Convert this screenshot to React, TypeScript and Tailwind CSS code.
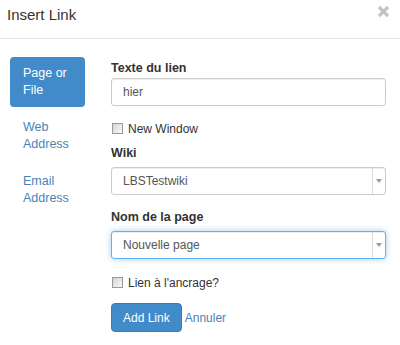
const NAV = ["Page or File", "Web Address", "Email Address"];

function Checkbox() {
  return (
    <span className="block h-[11px] w-[11px] shrink-0 border border-[#9a9a9a] bg-gradient-to-br from-[#d4d4d4] to-[#fafafa]" />
  );
}

function Caret() {
  return (
    <svg width="6" height="4" viewBox="0 0 6 4" aria-hidden="true">
      <path d="M0 0h6L3 4z" fill="#9a9a9a" />
    </svg>
  );
}

function Select({ value, focused }: { value: string; focused?: boolean }) {
  return (
    <div
      className={
        "flex h-[28px] items-stretch rounded-[3px] border bg-white " +
        (focused
          ? "border-[#66afe9] shadow-[0_0_6px_rgba(102,175,233,0.6),inset_0_1px_1px_rgba(0,0,0,0.075)]"
          : "border-[#cccccc] shadow-[inset_0_1px_1px_rgba(0,0,0,0.075)]")
      }
    >
      <span className="flex flex-1 items-center pl-[11px] text-[12px] text-[#555]">{value}</span>
      <span className="flex w-[13px] items-center justify-center border-l border-[#d9d9d9]">
        <Caret />
      </span>
    </div>
  );
}

export default function App() {
  return (
    <div className="h-[345px] w-[400px] overflow-hidden bg-white font-['Liberation_Sans',Arial,sans-serif] text-[#333]">
      {/* Header: title + close, thin rule at y=38 */}
      <header className="flex h-[39px] items-start justify-between border-b border-[#e5e5e5] pl-[7px] pr-[10px] pt-[5px]">
        <h1 className="text-[15px] leading-[20px]">Insert Link</h1>
        <svg width="13" height="13" viewBox="0 0 13 13" aria-label="Close">
          <path d="M2 2l9 9M11 2l-9 9" stroke="#c3c3c3" strokeWidth="3.2" />
        </svg>
      </header>

      <div className="flex pt-[18px]">
        {/* Link type tabs */}
        <nav className="ml-[10px] flex w-[75px] flex-col gap-[4px]">
          {NAV.map((label, i) => (
            <span
              key={label}
              className={
                "rounded-[4px] px-[13px] py-[8px] text-[12.5px] leading-[17px] " +
                (i === 0 ? "bg-[#428bca] text-white" : "text-[#4a82b8]")
              }
            >
              {label}
            </span>
          ))}
        </nav>

        {/* Form */}
        <form className="ml-[26px] flex w-[275px] flex-col pt-[3px]">
          <label className="text-[12.5px] font-bold leading-[17px]">Texte du lien</label>
          <div className="mt-px flex h-[28px] items-center rounded-[3px] border border-[#cccccc] pl-[11px] text-[12px] text-[#555] shadow-[inset_0_1px_1px_rgba(0,0,0,0.075)]">
            hier
          </div>

          <div className="mt-[14px] flex h-[17px] items-center gap-[5px] pl-px text-[12px]">
            <Checkbox />
            <span>New Window</span>
          </div>

          <label className="mt-[8px] text-[12.5px] font-bold leading-[17px]">Wiki</label>
          <div className="mt-[5px]">
            <Select value="LBSTestwiki" />
          </div>

          <label className="mt-[14px] text-[12.5px] font-bold leading-[17px]">Nom de la page</label>
          <div className="mt-[5px]">
            <Select value="Nouvelle page" focused />
          </div>

          <div className="mt-[15px] flex h-[17px] items-center gap-[5px] pl-px text-[12px]">
            <Checkbox />
            <span>Lien à l'ancrage?</span>
          </div>

          <div className="mt-[12px] flex items-center">
            <button
              type="button"
              className="h-[29px] rounded-[4px] border border-[#357ebd] bg-[#428bca] px-[11px] text-[12px] text-white"
            >
              Add Link
            </button>
            <span className="ml-[3px] text-[12px] text-[#4a82b8]">Annuler</span>
          </div>
        </form>
      </div>
    </div>
  );
}
